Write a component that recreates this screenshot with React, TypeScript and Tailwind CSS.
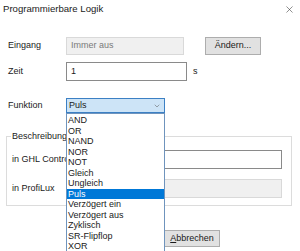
import { X, ChevronDown } from "lucide-react";

const options = [
  "AND",
  "OR",
  "NAND",
  "NOR",
  "NOT",
  "Gleich",
  "Ungleich",
  "Puls",
  "Verzögert ein",
  "Verzögert aus",
  "Zyklisch",
  "SR-Flipflop",
  "XOR",
];

export default function App() {
  return (
    <div
      className="relative w-[300px] h-[251px] overflow-hidden bg-white text-[9px] text-[#1a1a1a]"
      style={{ fontFamily: '"Liberation Sans", Arial, sans-serif' }}
    >
      {/* Title bar */}
      <div className="flex items-center justify-between h-[18px] pl-[3px] pr-[5px]">
        <span className="text-[9.6px] text-[#222]">Programmierbare Logik</span>
        <X className="w-[11px] h-[11px] text-[#333]" strokeWidth={1.2} />
      </div>

      <div className="flex flex-col pl-[8px]">
        {/* Eingang */}
        <div className="flex items-center mt-[19px] h-[18px]">
          <span className="w-[58px]">Eingang</span>
          <div className="w-[118px] h-[18px] bg-[#f0f0f0] border border-[#d9d9d9] flex items-center pl-[4px] text-[#7a7a7a]">
            Immer aus
          </div>
          <button className="ml-[21px] w-[56px] h-[18px] bg-[#e1e1e1] border border-[#adadad] text-[9px]">
            Ändern...
          </button>
        </div>

        {/* Zeit */}
        <div className="flex items-center mt-[7px] h-[19px]">
          <span className="w-[58px]">Zeit</span>
          <div className="w-[121px] h-[19px] bg-white border border-[#8a8a8a] flex items-center pl-[4px]">
            1
          </div>
          <span className="ml-[6px]">s</span>
        </div>

        {/* Funktion */}
        <div className="flex items-center mt-[17px] h-[15px]">
          <span className="w-[58px]">Funktion</span>
          <div className="w-[99px] h-[15px] bg-[#cde4f7] border border-[#3c80c4] flex items-center justify-between pl-[2px] pr-[3px]">
            <span>Puls</span>
            <ChevronDown className="w-[8px] h-[8px] text-[#555]" strokeWidth={1.5} />
          </div>
        </div>

        {/* Beschreibung group */}
        <fieldset className="mt-[19px] -ml-[2px] w-[286px] h-[74px] border border-[#dcdcdc] pl-[5px] pr-[9px]">
          <legend className="px-[1px] -ml-[1px] leading-none">Beschreibung</legend>
          <div className="flex items-center mt-[9px] h-[19px]">
            <span className="w-[145px]">in GHL Control</span>
            <div className="flex-1 h-[19px] bg-white border border-[#8a8a8a]" />
          </div>
          <div className="flex items-center mt-[10px] h-[19px]">
            <span className="w-[145px]">in ProfiLux</span>
            <div className="flex-1 h-[19px] bg-[#f0f0f0] border border-[#d9d9d9]" />
          </div>
        </fieldset>

        {/* Buttons */}
        <div className="flex mt-[24px] pl-[156px]">
          <button className="w-[56px] h-[17px] bg-[#e1e1e1] border border-[#adadad] text-[9px]">
            <span className="underline">A</span>bbrechen
          </button>
        </div>
      </div>

      {/* Open dropdown list */}
      <div className="absolute left-[66px] top-[113px] w-[99px] h-[140px] bg-white border border-[#6f94bd] py-[1px]">
        {options.map((o) => (
          <div
            key={o}
            className={
              "h-[10.5px] leading-[10.5px] pl-[1px] " +
              (o === "Puls" ? "bg-[#0078d7] text-white" : "")
            }
          >
            {o}
          </div>
        ))}
      </div>
    </div>
  );
}
